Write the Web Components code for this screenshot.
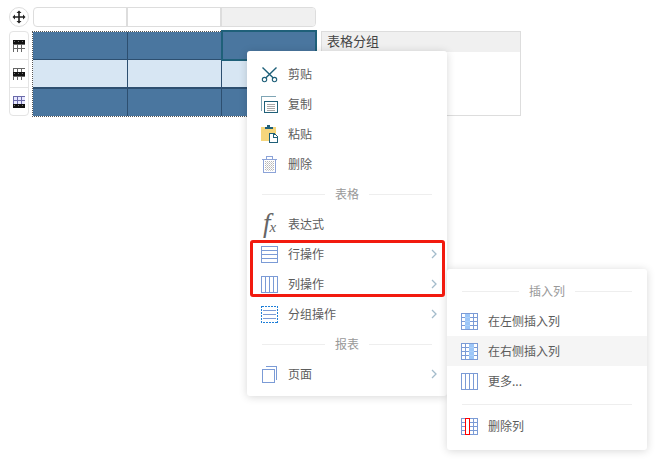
<!DOCTYPE html>
<html lang="zh"><head><meta charset="utf-8"><title>表格</title>
<style>html,body{margin:0;padding:0;background:#fff;overflow:hidden}body{width:655px;height:460px;font-family:"Noto Sans CJK SC","Liberation Sans",sans-serif}</style>
</head><body>
<rp-designer>
  <rp-move slot="move"></rp-move>
  <rp-colbar slot="cols"></rp-colbar>
  <rp-rowbar slot="rows"></rp-rowbar>
  <rp-grid slot="grid"></rp-grid>
  <rp-panel slot="panel">表格分组</rp-panel>
  <rp-menu slot="overlay" style="left:247px;top:51px;padding:8px 0 7px">
    <rp-item icon="cut">剪贴</rp-item>
    <rp-item icon="copy">复制</rp-item>
    <rp-item icon="paste">粘贴</rp-item>
    <rp-item icon="trash">删除</rp-item>
    <rp-sep>表格</rp-sep>
    <rp-item icon="fx">表达式</rp-item>
    <rp-item icon="rows" arrow>行操作</rp-item>
    <rp-item icon="cols" arrow>列操作</rp-item>
    <rp-item icon="group" arrow>分组操作</rp-item>
    <rp-sep>报表</rp-sep>
    <rp-item icon="page" arrow>页面</rp-item>
  </rp-menu>
  <rp-menu slot="overlay" style="left:447px;top:269px;padding:7px 0 9px">
    <rp-sep>插入列</rp-sep>
    <rp-item icon="insl">在左侧插入列</rp-item>
    <rp-item icon="insr" hover>在右侧插入列</rp-item>
    <rp-item icon="cols">更多...</rp-item>
    <rp-line></rp-line>
    <rp-item icon="delc">删除列</rp-item>
  </rp-menu>
  <rp-highlight slot="overlay"></rp-highlight>
</rp-designer>
<script>
const el=(name,css,html)=>{customElements.define(name,class extends HTMLElement{
  connectedCallback(){ if(this.shadowRoot) return; const r=this.attachShadow({mode:'open'});
    r.innerHTML='<style>'+css+'</style>'+(typeof html==='function'?html(this):html); }
});};
const B='#7b9bd6', T='#1f6079';
const svg=(b)=>`<svg width="18" height="18" viewBox="0 0 18 18" fill="none" shape-rendering="crispEdges">${b}</svg>`;
const down=(b)=>`<g transform="translate(0 1)">${b}</g>`;
const gridCells=(after)=>{let s=`<rect x=".5" y=".5" width="16" height="16" fill="#fff"/>`;
  for(const p of [4.5,8.5,12.5]) s+=`<path d="M${p} 1V16M1 ${p}H16" stroke="${B}"/>`;
  s+=`<rect x=".5" y=".5" width="16" height="16" stroke="${B}"/>`+(after||'');return svg(down(s));};
const hl=(x)=>`<rect x="${x}" y="1" width="5" height="15" fill="#9cc6f8"/><path d="M${x} 4.500H${x+5}M${x} 8.500H${x+5}M${x} 12.500H${x+5}" stroke="#aacff8"/>`;
const icons={
 cut:`<svg width="18" height="18" viewBox="0 0 18 18" fill="none" stroke="${T}"><path d="M1.500 2.500 12.300 13M15.500 2.500 4.700 13" stroke-width="1.400"/><circle cx="3.500" cy="14.600" r="2.200" stroke-width="1.100"/><circle cx="13.500" cy="14.600" r="2.200" stroke-width="1.100"/></svg>`,
 copy:svg(`<path d="M.5 16V1.500H14.500" stroke="#7fa5b5"/><rect x="3.500" y="6.500" width="13" height="11" fill="#fff" stroke="${T}"/><path d="M6 9.500H14M6 11.500H14M6 13.500H14M6 15.500H14" stroke="#a8a8a8"/>`),
 paste:svg(`<rect x="0" y="2" width="15" height="14" fill="#f5d67c"/><path d="M4 3.500V2H6L6.500 0H9L9.500 2H11.500V3.500Z" fill="${T}"/><path d="M8.500 8.500H13L16.500 11.500V17.500H8.500Z" fill="#fff" stroke="${T}"/><path d="M12.500 8.500V12H16" stroke="${T}"/>`),
 trash:svg(`<path d="M1 4.500H16" stroke="#8ca3d8"/><path d="M5.500 4V1.500H11.500V4" stroke="#8ca3d8"/><rect x="2.500" y="4.500" width="12" height="13" stroke="#8ca3d8" fill="#fff"/><rect x="4" y="6" width="9" height="10" fill="url(#dots)"/><defs><pattern id="dots" width="2" height="2" patternUnits="userSpaceOnUse"><rect width="1" height="1" fill="#b5b5b5"/><rect x="1" y="1" width="1" height="1" fill="#d0d0d0"/></pattern></defs>`),
 rows:svg(down(`<rect x=".5" y=".5" width="16" height="16" stroke="${B}"/><path d="M1 4.500H16M1 8.500H16M1 12.500H16" stroke="${B}"/>`)),
 cols:svg(down(`<rect x=".5" y=".5" width="16" height="16" stroke="${B}"/><path d="M4.500 1V16M8.500 1V16M12.500 1V16" stroke="${B}"/>`)),
 group:svg(down(`<rect x=".5" y=".5" width="16" height="16" stroke="#1f7fd8" stroke-dasharray="2 1"/><path d="M2 4.500H15M2 8.500H15M2 12.500H15" stroke="${B}"/>`)),
 page:svg(`<path d="M4.500 1.500H15.500V15" stroke="${B}"/><rect x="1.500" y="4.500" width="12" height="13" stroke="${B}" fill="#fff"/>`),
 insl:gridCells(hl(4)),
 insr:gridCells(hl(8)),
 delc:gridCells(`<rect x="4.500" y=".5" width="4" height="16" fill="#fff" stroke="#f00"/>`),
};
const rowGlyph=(i)=>{
  const line=i===2?'#6a6aaa':'#666', cell=i===2?'#e8e8ff':'#fff';
  let s=`<svg width="12" height="12" viewBox="0 0 12 12" shape-rendering="crispEdges"><rect width="12" height="12" fill="${line}"/>`;
  for(let r=0;r<3;r++){
    if(r===i){ s+=`<rect y="${r*4}" width="12" height="4" fill="#111"/>`;
      for(const x of [1,5,9]) s+=`<rect x="${x}" y="${r*4+1}" width="1" height="1" fill="#777"/>`; continue; }
    for(const x of [0,4,8]) s+=`<rect x="${x+1}" y="${r*4+1}" width="3" height="3" fill="${cell}"/>`;
  }
  return s+'</svg>';
};
el('rp-designer',`:host{display:block;position:relative;width:655px;height:460px;box-sizing:border-box;padding:7px 0 0 9px;font-size:12px;color:#555}
 .top{display:flex;height:20px;margin-bottom:4px}
 .body{display:flex;align-items:flex-start}
 .gap{width:4px}`,
 `<div class="top"><slot name="move"></slot><slot name="cols"></slot></div>
  <div class="body"><slot name="rows"></slot><slot name="grid"></slot><div class="gap"></div><slot name="panel"></slot></div>
  <slot name="overlay"></slot>`);
el('rp-move',`:host{width:20px;height:20px;margin-right:4px;box-sizing:border-box;border:1px solid #ddd;border-radius:50%;background:#fff;display:flex;align-items:center;justify-content:center}`,
 `<svg width="14" height="14" viewBox="0 0 14 14" fill="#222"><path d="M6.200 3H7.800V6.200H11V4.500L13.500 7 11 9.500V7.800H7.800V11H9.500L7 13.500 4.500 11H6.200V7.800H3V9.500L.5 7 3 4.500V6.200H6.200V3ZM4.500 3 7 .5 9.500 3Z"/></svg>`);
el('rp-colbar',`:host{display:flex;width:283px;height:20px;box-sizing:border-box;border:1px solid #ddd;border-radius:4px;overflow:hidden}
 i{display:block;box-sizing:border-box;border-right:2px solid #ddd;width:94px}i:last-child{border:0;background:#f0f0f0;flex:1}`,`<i></i><i></i><i></i>`);
el('rp-rowbar',`:host{display:flex;flex-direction:column;width:20px;height:85px;margin-right:3px;box-sizing:border-box;border:1px solid #e4e4e4;border-radius:4px;overflow:hidden}
 i{display:flex;box-sizing:border-box;height:28px;align-items:center;justify-content:center;border-bottom:1px solid #e4e4e4}i:last-child{border:0;flex:1}i:first-child{background:#f0f0f0}`,
 ()=>[0,1,2].map(i=>`<i>${rowGlyph(i)}</i>`).join(''));
el('rp-grid',`:host{display:block;position:relative;box-sizing:border-box;width:285px;height:86px;border:1px dotted #555}
 .t{display:grid;grid-template-columns:95px 94px 94px;grid-template-rows:28px 29px 27px;height:100%}
 .c{background:#4a769f;box-sizing:border-box;border-right:1px solid #2d4f70;border-bottom:1px solid #2d4f70}
 .l{background:#d7e6f3}.c:nth-child(3n){border-right:0}.c:nth-child(n+7){border-bottom:0}
 .c:nth-child(n+4):nth-child(-n+6){border-bottom-width:2px}
 .s{position:absolute;left:188px;top:-2px;width:96px;height:31px;box-sizing:border-box;border:2px solid #1f6079}`,
 `<div class="t"><div class="c"></div><div class="c"></div><div class="c"></div><div class="c l"></div><div class="c l"></div><div class="c l"></div><div class="c"></div><div class="c"></div><div class="c"></div></div><div class="s"></div>`);
el('rp-panel',`:host{display:block;width:200px;height:85px;box-sizing:border-box;border:1px solid #ddd}
 div{height:20px;line-height:18px;background:#f0f0f0;padding-left:5px;font-size:13px;color:#444}`,`<div><slot></slot></div>`);
el('rp-menu',`:host{display:block;position:absolute;width:200px;box-sizing:border-box;background:#fff;border-radius:3px;box-shadow:0 1px 8px rgba(0,0,0,.16)}`,`<slot></slot>`);
el('rp-item',`:host{display:flex;align-items:center;height:30px;padding-left:14px;color:#5c5c5c;font-size:12px}
 :host([hover]){background:#f5f5f5}
 .i{width:18px;height:18px;margin-right:9px;display:block;flex:none}
 .t{flex:1;margin-top:-2px}
 .fx{display:block;height:18px;font:italic 27px/16px "Liberation Serif",serif;color:#666;white-space:nowrap;letter-spacing:-1px;padding-left:2px}.fx small{font-size:15px}
 svg.a{margin-right:10px}`,
 h=>{const k=h.getAttribute('icon');const ic=k==='fx'?`<span class="fx">f<small>x</small></span>`:icons[k];
  return `<span class="i">${ic}</span><span class="t"><slot></slot></span>`+(h.hasAttribute('arrow')?`<svg class="a" width="6" height="10" viewBox="0 0 6 10" fill="none" stroke="#a4bccb" stroke-width="1.300"><path d="M1 1 5 5 1 9"/></svg>`:'');});
el('rp-sep',`:host{display:flex;align-items:center;height:30px;padding:0 15px;color:#999;font-size:12px;gap:10px}
 i{flex:1;height:1px;background:#eee}span{margin-top:-2px}`,`<i></i><span><slot></slot></span><i></i>`);
el('rp-line',`:host{display:block;height:1px;margin:8px 15px 6px;background:#eee}`,``);
el('rp-highlight',`:host{display:block;position:absolute;left:250px;top:240px;width:195px;height:57px;box-sizing:border-box;border:3px solid #f21a0e;border-radius:3px}`,``);
</script>
</body></html>
